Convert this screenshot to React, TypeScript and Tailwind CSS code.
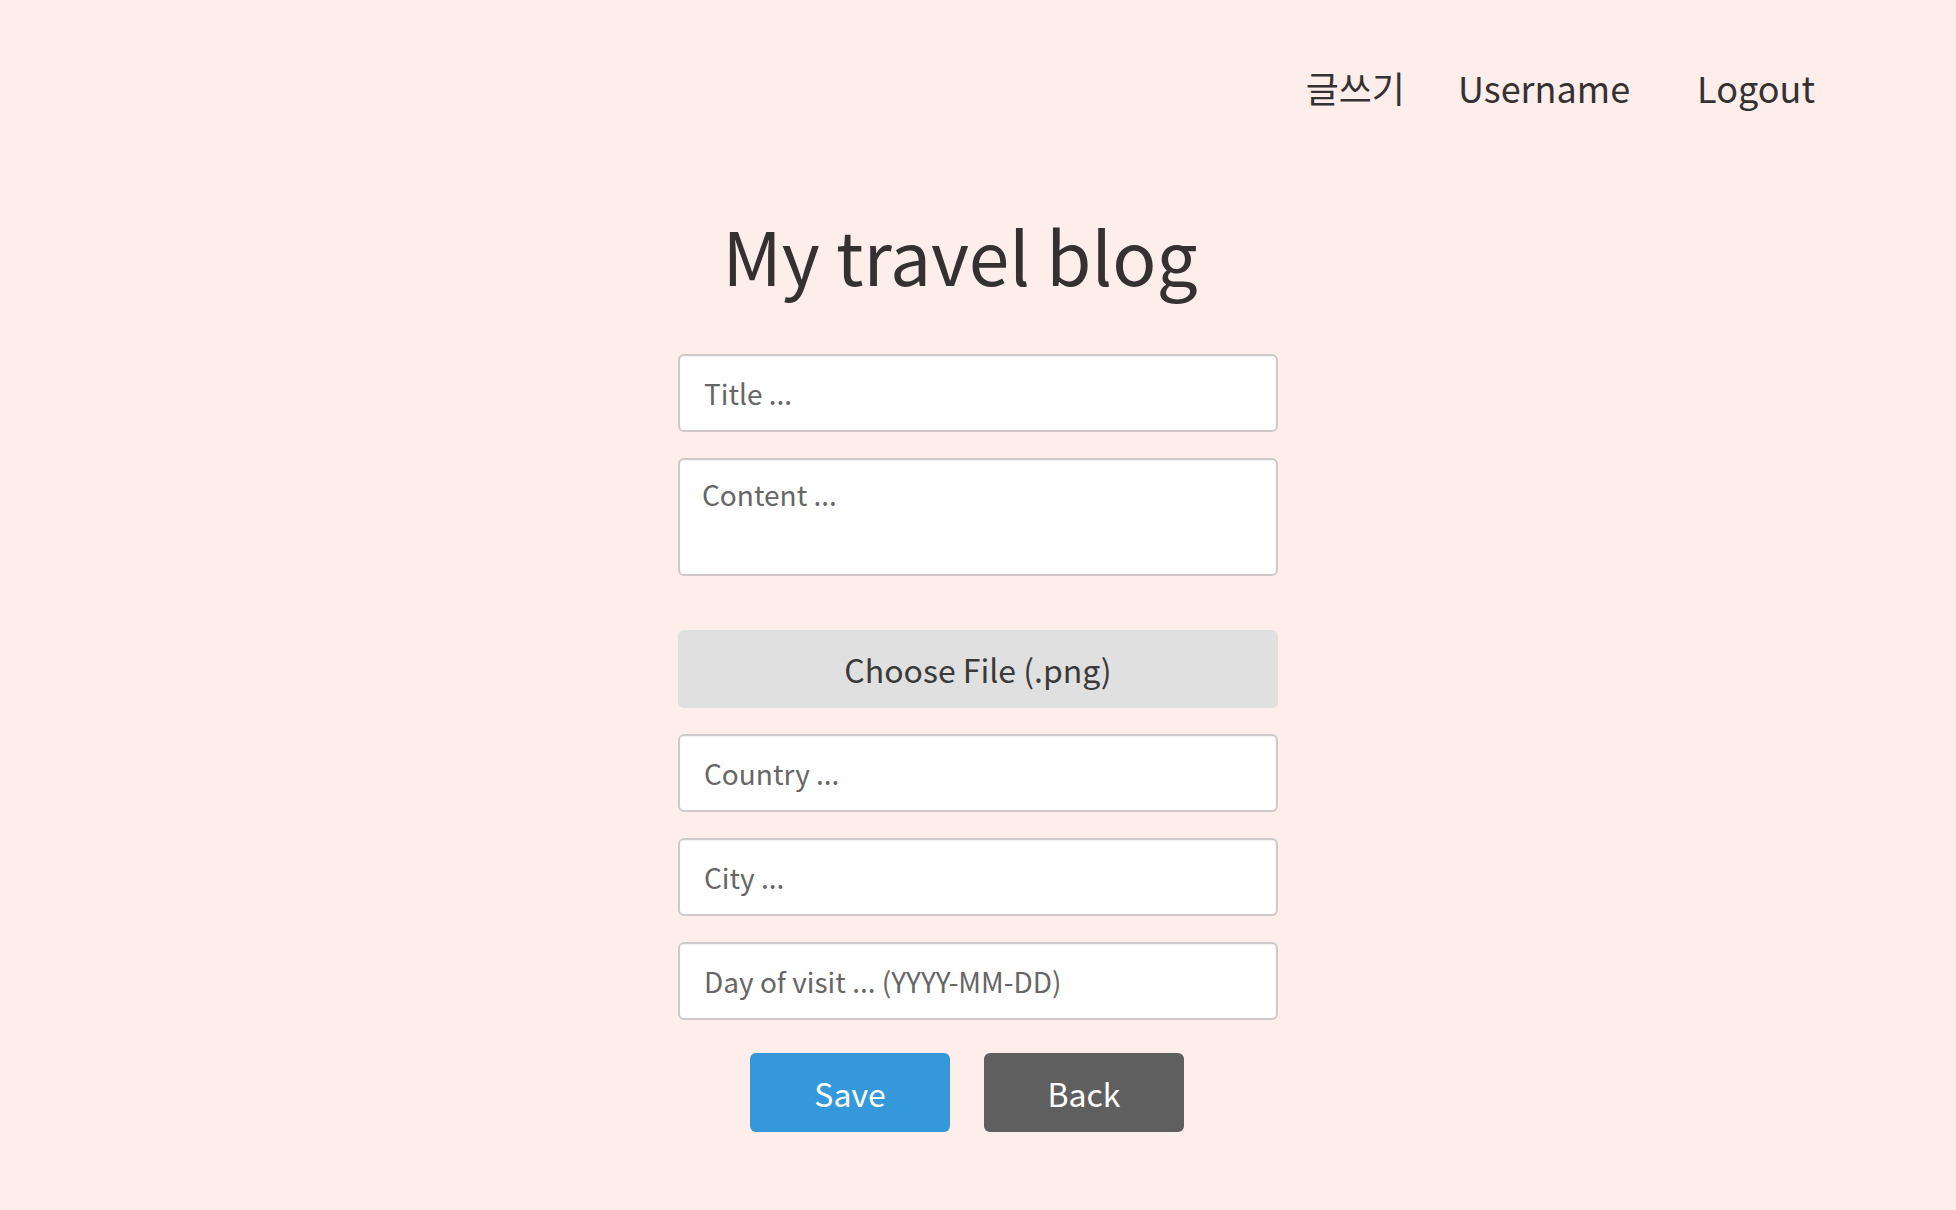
import React from "react";

export default function App() {
  const inputCls =
    "block w-full h-[78px] border-2 border-[#d0c9c9] rounded-[6px] bg-white px-[24px] text-[28px] text-[#333] placeholder:text-[#666] outline-none shadow-[inset_0_1px_2px_rgba(0,0,0,0.06)]";
  return (
    <div className="min-h-screen bg-[#fdeeec] text-[#363131] font-['Noto_Sans_CJK_KR','Noto_Sans',sans-serif]">
      <header className="flex justify-end pt-[63px] pr-[141px] text-[36px] leading-[48px]">
        <a href="#" className="text-[#363131]">글쓰기</a>
        <a href="#" className="ml-[53px] text-[#363131]">Username</a>
        <a href="#" className="ml-[67px] text-[#363131]">Logout</a>
      </header>
      <h1 className="mt-[95px] text-[73px] leading-[96px] text-center pr-[36px] font-normal">
        My travel blog
      </h1>
      <form className="mt-[52px] mx-auto w-[600px] flex flex-col" onSubmit={(e) => e.preventDefault()}>
        <input className={inputCls} placeholder="Title ..." />
        <textarea
          className="mt-[26px] block w-full h-[118px] border-2 border-[#d0c9c9] rounded-[6px] bg-white px-[22px] pt-[14px] text-[28px] leading-[40px] text-[#333] placeholder:text-[#666] outline-none resize-none shadow-[inset_0_1px_2px_rgba(0,0,0,0.06)]"
          placeholder="Content ..."
        />
        <label className="mt-[54px] flex h-[78px] w-full items-center justify-center rounded-[6px] bg-[#e0e0e0] text-[32px] text-[#3a3a3a] cursor-pointer">
          Choose File (.png)
          <input type="file" accept=".png" className="hidden" />
        </label>
        <input className={`mt-[26px] ${inputCls}`} placeholder="Country ..." />
        <input className={`mt-[26px] ${inputCls}`} placeholder="City ..." />
        <input className={`mt-[26px] ${inputCls}`} placeholder="Day of visit ... (YYYY-MM-DD)" />
        <div className="mt-[33px] flex justify-center gap-[34px] pr-[22px]">
          <button type="submit" className="h-[79px] w-[200px] rounded-[6px] bg-[#3598db] text-[32px] text-white">
            Save
          </button>
          <button type="button" className="h-[79px] w-[200px] rounded-[6px] bg-[#5f5f5f] text-[32px] text-white">
            Back
          </button>
        </div>
      </form>
    </div>
  );
}
